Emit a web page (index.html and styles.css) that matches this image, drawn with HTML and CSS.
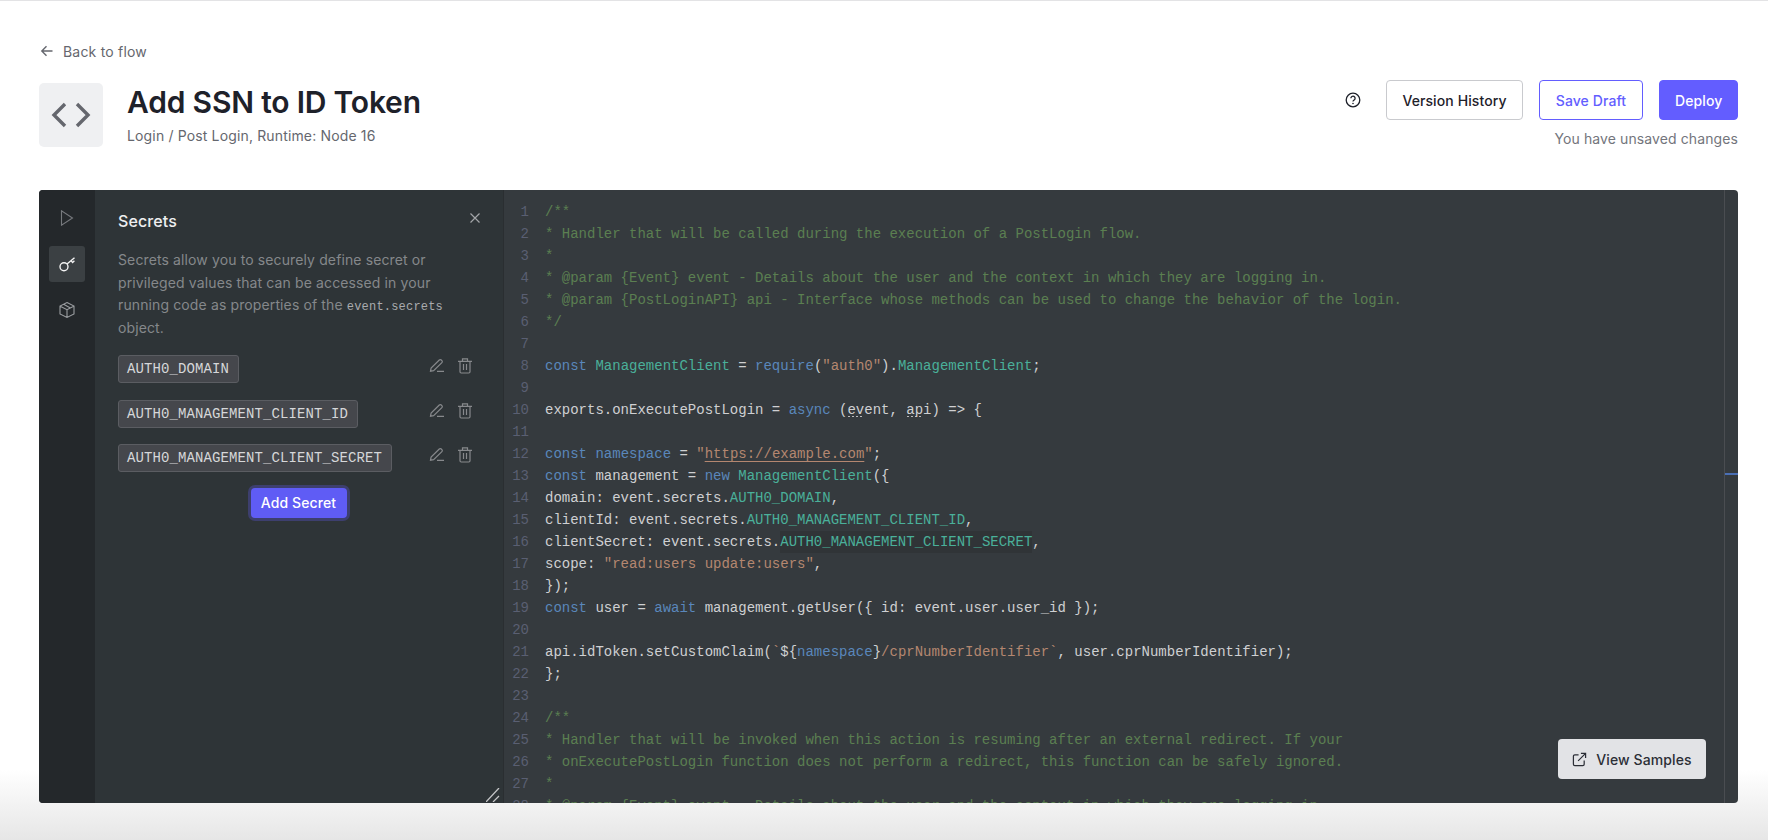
FILE: index.html
```html
<!DOCTYPE html>
<html lang="en">
<head>
<meta charset="utf-8">
<title>Add SSN to ID Token</title>
<link rel="stylesheet" href="styles.css">
</head>
<body>
<div class="page">
  <a class="back"><svg class="back-icon" viewBox="0 0 14 14" width="14" height="14"><path d="M12.5 7H1.8M6.5 2.2 1.8 7l4.7 4.8"/></svg>Back to flow</a>
  <header class="head">
    <div class="tile"><svg viewBox="0 0 64 64" width="64" height="64"><path d="M26 21 15 32l11 11M38 21l11 11-11 11"/></svg></div>
    <div class="titles">
      <h1>Add SSN to ID Token</h1>
      <p>Login / Post Login, Runtime: Node 16</p>
    </div>
    <div class="actions">
      <div class="buttons">
        <svg class="help" viewBox="0 0 16 16" width="16" height="16"><circle cx="8" cy="8" r="6.8"/><path d="M5.9 6.3a2.1 2.1 0 1 1 3.3 1.7C8.500 8.500 8 8.800 8 9.600"/><circle class="dot" cx="8" cy="11.500" r=".8"/></svg>
        <button class="btn btn-plain">Version History</button>
        <button class="btn btn-outline">Save Draft</button>
        <button class="btn btn-solid">Deploy</button>
      </div>
      <div class="unsaved">You have unsaved changes</div>
    </div>
  </header>

  <section class="panel">
    <nav class="rail">
      <div class="rail-btn dim"><svg viewBox="0 0 16 16" width="16" height="16"><path d="M2.500 .8v14.400L13.500 8z"/></svg></div>
      <div class="rail-btn active"><svg viewBox="0 0 18 18" width="18" height="18"><circle cx="6" cy="11.700" r="4"/><path d="M9 9 16.500 2.700M13 5.600l1.600 1.800 1.800-1.600"/></svg></div>
      <div class="rail-btn"><svg viewBox="0 0 16 16" width="16" height="16"><path d="M8 .6 15 4v8L8 15.400 1 12V4zM1.300 4.300 8 7.700l6.700-3.400M8 7.700v7.700M4.600 2.300l6.800 3.700"/></svg></div>
    </nav>
    <aside class="secrets">
      <div class="secrets-head">
        <h2>Secrets</h2>
        <svg class="close" viewBox="0 0 12 12" width="12" height="12"><path d="M1.500 1.500l9 9M10.500 1.500l-9 9"/></svg>
      </div>
      <p class="intro">Secrets allow you to securely define secret or privileged values that can be accessed in your running code as properties of the <code>event.secrets</code> object.</p>
      <div class="secret-list">
        <div class="secret"><span class="tag">AUTH0_DOMAIN</span>
          <span class="tools">
            <svg viewBox="0 0 16 16" width="16" height="16"><path d="M1.500 13.200l.6-3.100L10.300 2a1.400 1.400 0 0 1 2 0l.6.600a1.400 1.400 0 0 1 0 2L4.600 12.600zM8 13.400h7"/></svg>
            <svg viewBox="0 0 16 16" width="16" height="16"><path d="M1 3.300h14M5.500 3.300V.8h5v2.500M3 3.300v10.500c0 .8.500 1.200 1.200 1.200h7.600c.7 0 1.200-.4 1.200-1.200V3.300M6.500 6v6M9.500 6v6"/></svg>
          </span>
        </div>
        <div class="secret"><span class="tag">AUTH0_MANAGEMENT_CLIENT_ID</span>
          <span class="tools">
            <svg viewBox="0 0 16 16" width="16" height="16"><path d="M1.500 13.200l.6-3.100L10.300 2a1.400 1.400 0 0 1 2 0l.6.600a1.400 1.400 0 0 1 0 2L4.600 12.600zM8 13.400h7"/></svg>
            <svg viewBox="0 0 16 16" width="16" height="16"><path d="M1 3.300h14M5.500 3.300V.8h5v2.500M3 3.300v10.500c0 .8.500 1.200 1.200 1.200h7.600c.7 0 1.200-.4 1.200-1.200V3.300M6.500 6v6M9.500 6v6"/></svg>
          </span>
        </div>
        <div class="secret"><span class="tag">AUTH0_MANAGEMENT_CLIENT_SECRET</span>
          <span class="tools">
            <svg viewBox="0 0 16 16" width="16" height="16"><path d="M1.500 13.200l.6-3.100L10.300 2a1.400 1.400 0 0 1 2 0l.6.600a1.400 1.400 0 0 1 0 2L4.600 12.600zM8 13.400h7"/></svg>
            <svg viewBox="0 0 16 16" width="16" height="16"><path d="M1 3.300h14M5.500 3.300V.8h5v2.500M3 3.300v10.500c0 .8.500 1.200 1.200 1.200h7.600c.7 0 1.200-.4 1.200-1.200V3.300M6.500 6v6M9.500 6v6"/></svg>
          </span>
        </div>
      </div>
      <button class="add">Add Secret</button>
      <svg class="grip" viewBox="0 0 14 14" width="14" height="14"><path d="M0 14 13 0M7 14l6-6"/></svg>
    </aside>
    <div class="editor">
      <div class="code">
<div class="line"><span class="ln">1</span><span class="c">/**</span></div>
<div class="line"><span class="ln">2</span><span class="c">* Handler that will be called during the execution of a PostLogin flow.</span></div>
<div class="line"><span class="ln">3</span><span class="c">*</span></div>
<div class="line"><span class="ln">4</span><span class="c">* @param {Event} event - Details about the user and the context in which they are logging in.</span></div>
<div class="line"><span class="ln">5</span><span class="c">* @param {PostLoginAPI} api - Interface whose methods can be used to change the behavior of the login.</span></div>
<div class="line"><span class="ln">6</span><span class="c">*/</span></div>
<div class="line"><span class="ln">7</span></div>
<div class="line"><span class="ln">8</span><span class="k">const</span> <span class="t">ManagementClient</span> = <span class="k">require</span>(<span class="s">"auth0"</span>).<span class="t">ManagementClient</span>;</div>
<div class="line"><span class="ln">9</span></div>
<div class="line"><span class="ln">10</span>exports.onExecutePostLogin = <span class="k">async</span> (<span class="hint">ev</span>ent, <span class="hint">ap</span>i) =&gt; {</div>
<div class="line"><span class="ln">11</span></div>
<div class="line"><span class="ln">12</span><span class="k">const</span> <span class="k">namespace</span> = <span class="s">"<span class="u">https://example.com</span>"</span>;</div>
<div class="line"><span class="ln">13</span><span class="k">const</span> management = <span class="k">new</span> <span class="t">ManagementClient</span>({</div>
<div class="line"><span class="ln">14</span>domain: event.secrets.<span class="t">AUTH0_DOMAIN</span>,</div>
<div class="line"><span class="ln">15</span>clientId: event.secrets.<span class="t">AUTH0_MANAGEMENT_CLIENT_ID</span>,</div>
<div class="line"><span class="ln">16</span>clientSecret: event.secrets.<span class="t mark">AUTH0_MANAGEMENT_CLIENT_SECRET</span>,</div>
<div class="line"><span class="ln">17</span>scope: <span class="s">"read:users update:users"</span>,</div>
<div class="line"><span class="ln">18</span>});</div>
<div class="line"><span class="ln">19</span><span class="k">const</span> user = <span class="k">await</span> management.getUser({ id: event.user.user_id });</div>
<div class="line"><span class="ln">20</span></div>
<div class="line"><span class="ln">21</span>api.idToken.setCustomClaim(<span class="s">`</span>${<span class="k">namespace</span>}<span class="s">/cprNumberIdentifier`</span>, user.cprNumberIdentifier);</div>
<div class="line"><span class="ln">22</span>};</div>
<div class="line"><span class="ln">23</span></div>
<div class="line"><span class="ln">24</span><span class="c">/**</span></div>
<div class="line"><span class="ln">25</span><span class="c">* Handler that will be invoked when this action is resuming after an external redirect. If your</span></div>
<div class="line"><span class="ln">26</span><span class="c">* onExecutePostLogin function does not perform a redirect, this function can be safely ignored.</span></div>
<div class="line"><span class="ln">27</span><span class="c">*</span></div>
<div class="line"><span class="ln">28</span><span class="c">* @param {Event} event - Details about the user and the context in which they are logging in.</span></div>
      </div>
      <div class="overview"><div class="tick"></div></div>
      <button class="samples"><svg viewBox="0 0 16 16" width="15" height="15"><path d="M7 3H3a1.500 1.500 0 0 0-1.500 1.500v8.500A1.500 1.500 0 0 0 3 14.500h8.500A1.500 1.500 0 0 0 13 13V9M6.500 9.500 14.500 1.500M9.500 1.500h5v5"/></svg>View Samples</button>
    </div>
  </section>
</div>
</body>
</html>
```
FILE: styles.css
```css
* { box-sizing: border-box; }
html, body { margin: 0; height: 840px; overflow: hidden; }
body {
  font-family: Inter, "Liberation Sans", sans-serif;
  background: linear-gradient(#fff 770px, #e6e6e6 840px);
  border-top: 1px solid #e3e3e5;
  color: #1e212a;
}
svg { display: block; fill: none; stroke: currentColor; flex: none; }
.page { padding: 39px 30px 0 39px; }

.back {
  display: flex; align-items: center; gap: 9px;
  height: 22px; margin-bottom: 21px;
  font-size: 14px; letter-spacing: .2px; color: #65676e;
}
.back-icon { margin-left: 1px; stroke-width: 1.4; }

.head { display: flex; align-items: flex-start; height: 67px; margin-bottom: 40px; }
.tile { width: 64px; height: 64px; border-radius: 5px; background: #eff0f2; color: #65676e; }
.tile svg { stroke-width: 3.400; }
.titles { margin-left: 24px; flex: 1; }
h1 { margin: 0; font-size: 30px; line-height: 38px; font-weight: 600; letter-spacing: -.2px; }
.titles p { margin: 4px 0 0; font-size: 14px; line-height: 21px; letter-spacing: .15px; color: #65676e; }

.actions { margin-top: -3px; display: flex; flex-direction: column; align-items: flex-end; }
.buttons { display: flex; align-items: center; }
.help { margin-right: 25px; stroke-width: 1.300; color: #1e212a; }
.help .dot { fill: currentColor; stroke: none; }
.btn {
  height: 40px; padding: 0 15px; margin-left: 16px;
  border-radius: 4px; border: 1px solid; background: #fff;
  font: 500 14px Inter, sans-serif; letter-spacing: .1px;
}
.help + .btn { margin-left: 0; }
.btn-plain { border-color: #c9cace; color: #1e212a; width: 137px; }
.btn-outline { border-color: #635dff; color: #635dff; width: 104px; }
.btn-solid { border-color: #635dff; background: #635dff; color: #fff; width: 79px; }
.unsaved { margin-top: 8px; font-size: 14px; line-height: 22px; letter-spacing: .1px; color: #73757c; }

.panel { display: flex; height: 613px; border-radius: 4px; overflow: hidden; background: #353a3e; }
.rail {
  width: 56px; padding-top: 10px; background: #24282b;
  display: flex; flex-direction: column; align-items: center; gap: 10px;
}
.rail-btn { width: 36px; height: 36px; border-radius: 3px; display: flex; align-items: center; justify-content: center; color: #9a9da0; }
.rail-btn svg { stroke-width: 1.100; }
.rail-btn.dim { color: #76797d; }
.rail-btn.active { background: #3b4043; color: #f2f2f2; }
.rail-btn.active svg { stroke-width: 1.400; }

.secrets {
  position: relative; width: 408px; padding: 19px 21px 0 23px;
  background: #2e3437; display: flex; flex-direction: column;
}
.secrets-head { display: flex; justify-content: space-between; align-items: flex-start; margin-bottom: 16px; }
h2 { margin: 0; font-size: 16px; line-height: 24px; font-weight: 500; letter-spacing: .1px; color: #eeeff0; }
.close { margin: 3px 1px 0 0; color: #a3a5a8; stroke-width: 1.200; }
.intro { width: 346px; margin: 0 0 16px; font-size: 14px; line-height: 22.500px; letter-spacing: .12px; color: #85888b; }
.intro code { font: 12px "Liberation Mono", monospace; letter-spacing: .2px; color: #a9abae; }
.secret-list { display: flex; flex-direction: column; gap: 16.500px; }
.secret { display: flex; justify-content: space-between; align-items: flex-start; }
.tag {
  height: 28px; padding: 0 9px 0 8px;
  font: 14px/26px "Liberation Mono", monospace; letter-spacing: .1px; color: #d6d7d9;
  background: #45474c; border: 1px solid #5b5d62; border-radius: 3px;
}
.tools { display: flex; gap: 12px; margin: 3px 9px 0 0; color: #87898c; }
.tools svg { stroke-width: 1.200; }
.add {
  align-self: center; margin: 16px 0 0 -3px; width: 96px; height: 30px; padding: 0 0 1px;
  background: #5f5cf5; color: #fff; border: 0; border-radius: 4px;
  box-shadow: 0 0 0 3px #3d3f6e;
  font: 500 14px Inter, sans-serif; letter-spacing: .1px;
}
.grip { position: absolute; right: 3px; bottom: 1px; color: #c4c5c7; stroke-width: 1.300; }

.editor { position: relative; flex: 1; display: flex; border-left: 1px solid #2a2e31; min-width: 0; }
.code {
  flex: 1; min-width: 0; padding-top: 11px; overflow: hidden;
  font: 14px/22px "Liberation Mono", monospace; color: #cfd0d2;
}
.line { height: 22px; white-space: pre; }
.ln { display: inline-block; width: 25px; margin-right: 16px; text-align: right; color: #5a5f72; }
.c { color: #5b7f51; }
.k { color: #5a87bb; }
.t { color: #4ab09a; }
.s { color: #b48770; }
.u { text-decoration: underline; text-underline-offset: 3px; }
.mark { background: #303437; display: inline-block; }
.hint {
  background: radial-gradient(circle, #b8b9bb 0 .8px, transparent 1px) 0 100% / 4px 3px repeat-x;
}
.overview { width: 14px; border-left: 1px solid #4a4d51; padding-top: 283px; }
.tick { height: 2px; background: #4a6fb5; }
.samples {
  position: absolute; right: 32px; bottom: 24px; width: 148px; height: 40px; padding: 0 0 0 0;
  display: flex; align-items: center; justify-content: center; gap: 9px;
  background: #e2e3e6; color: #2b2e36; border: 0; border-radius: 4px;
  font: 500 14px Inter, sans-serif; letter-spacing: .1px;
}
.samples svg { stroke-width: 1.300; }
```
